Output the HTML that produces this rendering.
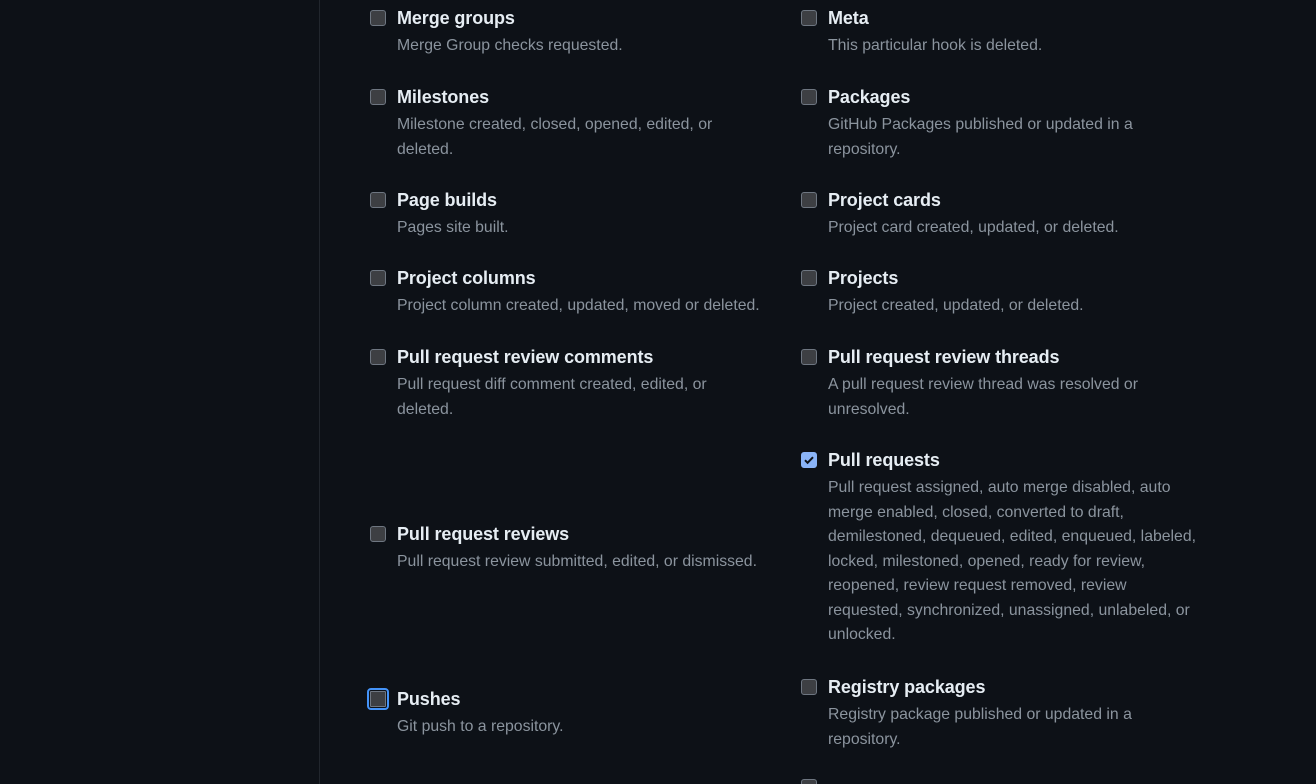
<!DOCTYPE html>
<html style="overflow:hidden"><head><meta charset="utf-8"><style>
html,body{margin:0;width:1316px;height:784px;overflow:hidden;}
body{background:#0d1117;position:relative;font-family:"Liberation Sans",Arial,sans-serif;}
.vl{position:absolute;left:319px;top:0;width:1px;height:784px;background:#21262d;}
.it{position:absolute;white-space:nowrap;}
.cb{position:absolute;left:-27px;top:4px;width:14px;height:14px;border:1px solid #6e7681;border-radius:3px;background:#3d3f43;}
.t{font-size:18px;font-weight:bold;color:#e6edf3;line-height:24px;letter-spacing:-0.1px;}
.d{font-size:15.8px;color:#8b949e;line-height:24.5px;margin-top:4px;}
.chk{background:#8ab4f8;border-color:#8ab4f8;}
.foc{outline:2px solid #4493f8;outline-offset:1px;border-radius:1px;}
</style></head><body>
<div class="vl"></div>

<div class="it" style="left:397px;top:6px"><div class="cb"></div><div class="t">Merge groups</div><div class="d">Merge Group checks requested.</div></div>
<div class="it" style="left:397px;top:85px"><div class="cb"></div><div class="t">Milestones</div><div class="d">Milestone created, closed, opened, edited, or<br>deleted.</div></div>
<div class="it" style="left:397px;top:188px"><div class="cb"></div><div class="t">Page builds</div><div class="d">Pages site built.</div></div>
<div class="it" style="left:397px;top:266px"><div class="cb"></div><div class="t">Project columns</div><div class="d">Project column created, updated, moved or deleted.</div></div>
<div class="it" style="left:397px;top:345px"><div class="cb"></div><div class="t">Pull request review comments</div><div class="d">Pull request diff comment created, edited, or<br>deleted.</div></div>
<div class="it" style="left:397px;top:522px"><div class="cb"></div><div class="t">Pull request reviews</div><div class="d">Pull request review submitted, edited, or dismissed.</div></div>
<div class="it" style="left:397px;top:687px"><div class="cb foc"></div><div class="t">Pushes</div><div class="d">Git push to a repository.</div></div>

<div class="it" style="left:828px;top:6px"><div class="cb"></div><div class="t">Meta</div><div class="d">This particular hook is deleted.</div></div>
<div class="it" style="left:828px;top:85px"><div class="cb"></div><div class="t">Packages</div><div class="d">GitHub Packages published or updated in a<br>repository.</div></div>
<div class="it" style="left:828px;top:188px"><div class="cb"></div><div class="t">Project cards</div><div class="d">Project card created, updated, or deleted.</div></div>
<div class="it" style="left:828px;top:266px"><div class="cb"></div><div class="t">Projects</div><div class="d">Project created, updated, or deleted.</div></div>
<div class="it" style="left:828px;top:345px"><div class="cb"></div><div class="t">Pull request review threads</div><div class="d">A pull request review thread was resolved or<br>unresolved.</div></div>
<div class="it" style="left:828px;top:448px"><div class="cb chk"><svg width="14" height="14" viewBox="0 0 14 14" style="position:absolute;left:0;top:0"><path d="M3 7.2l2.6 2.6L11 4.2" fill="none" stroke="#0d1117" stroke-width="2"/></svg></div><div class="t">Pull requests</div><div class="d">Pull request assigned, auto merge disabled, auto<br>merge enabled, closed, converted to draft,<br>demilestoned, dequeued, edited, enqueued, labeled,<br>locked, milestoned, opened, ready for review,<br>reopened, review request removed, review<br>requested, synchronized, unassigned, unlabeled, or<br>unlocked.</div></div>
<div class="it" style="left:828px;top:675px"><div class="cb"></div><div class="t">Registry packages</div><div class="d">Registry package published or updated in a<br>repository.</div></div>
<div class="it" style="left:828px;top:775px;height:9px;overflow:hidden;width:20px;margin-left:-27px"><div class="cb" style="left:0"></div></div>
</body></html>
